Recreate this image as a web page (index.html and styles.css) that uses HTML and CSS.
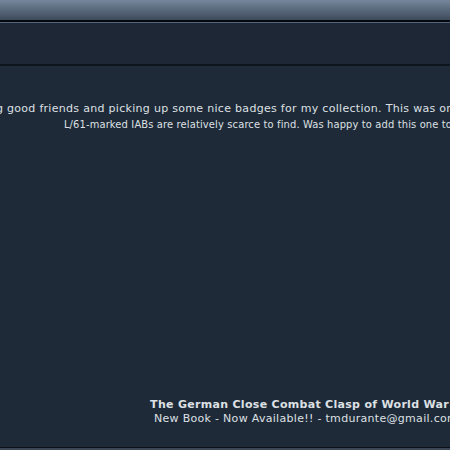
FILE: index.html
```html
<!doctype html>
<html lang="en">
<head>
<meta charset="UTF-8">
<title>Forum post</title>
<link rel="stylesheet" href="styles.css">
</head>
<body>
<div class="page">
	<div class="topbar"></div>
	<div class="navbar"></div>
	<div class="post">
		<div class="message">
			<p class="msg-line">Had a great time at the show, seeing good friends and picking up some nice badges for my collection. This was one of the last badges I picked up before leaving the show.</p>
			<p class="msg-line small">L/61-marked IABs are relatively scarce to find. Was happy to add this one to the group.</p>
		</div>
		<div class="signature">
			<b>The German Close Combat Clasp of World War II</b><br>
			New Book - Now Available!! - tmdurante@gmail.com
		</div>
	</div>
	<div class="footbar"></div>
</div>
</body>
</html>
```

FILE: styles.css
```css
*{margin:0;padding:0;}
html,body{background:#1f2a38;overflow:hidden;}
body{font-family:"DejaVu Sans",Verdana,sans-serif;font-size:11px;color:#dde0e4;}
.page{width:450px;height:450px;overflow:hidden;}
.topbar{
	height:20px;
	background:linear-gradient(#75879b,#3d4a5b);
	border-bottom:2px solid #05080c;
}
.navbar{
	height:41px;
	background:#1d2736;
	border-top:1px solid #556478;
	border-bottom:2px solid #0e141c;
}
.post{
	height:381px;
	background:#1f2a38;
	overflow:hidden;
}
.message{
	width:1600px;
	margin:35px 0 0 -515px;
	text-align:center;
	line-height:16px;
	white-space:nowrap;
}
.msg-line{
	letter-spacing:0.3px;
}
.msg-line.small{
	padding-left:2px;
	font-family:"DejaVu Sans Condensed","DejaVu Sans",Tahoma,sans-serif;
	letter-spacing:0.15px;
}
.signature{
	width:900px;
	margin:265px 0 0 -144px;
	text-align:center;
	line-height:14px;
	letter-spacing:0.3px;
	white-space:nowrap;
}
.footbar{
	height:2px;
	background:#3b4757;
	border-top:1px solid #0c1118;
}
```
